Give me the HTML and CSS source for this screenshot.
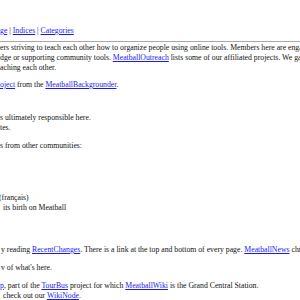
FILE: index.html
```html
<!DOCTYPE html>
<html lang="en">
<head>
    <meta charset="UTF-8">
    <title>MeatballWiki</title>
    <link rel="stylesheet" href="styles.css">
</head>
<body>
    <div class="page">
        <div class="nav"><a href="#">ge</a> | <a href="#">Indices</a> | <a href="#">Categories</a></div>
        <hr class="rule">

        <div class="intro">
            <div class="line">ers striving to teach each other how to organize people using online tools. Members here are engaged in building online communities</div>
            <div class="line">dge or supporting community tools. <a href="#">MeatballOutreach</a> lists some of our affiliated projects. We gather here to share what we know</div>
            <div class="line">aching each other.</div>
        </div>

        <div class="line about"><a href="#">oject</a> from the <a href="#">MeatballBackgrounder</a>.</div>

        <div class="people">
            <div class="line">s ultimately responsible here.</div>
            <div class="line">tes.</div>
        </div>

        <div class="line friends">s from other communities:</div>

        <div class="list">
            <div class="line out1">(français)</div>
            <div class="line in3">its birth on Meatball</div>
        </div>

        <div class="news">
            <div class="line in1">y reading <a href="#">RecentChanges</a>. There is a link at the top and bottom of every page. <a href="#">MeatballNews</a> chronicles</div>
        </div>

        <div class="line in1 overview">v of what's here.</div>

        <div class="tour">
            <div class="line"><a href="#">p</a>, part of the <a href="#">TourBus</a> project for which <a href="#">MeatballWiki</a> is the Grand Central Station.</div>
            <div class="line in3">check out our <a href="#">WikiNode</a>.</div>
        </div>
    </div>
</body>
</html>
```

FILE: styles.css
```css
html, body {
    margin: 0;
    padding: 0;
    background: #fff;
    overflow: hidden;
}

.page {
    width: 300px;
    height: 300px;
    overflow: hidden;
    font-family: "Liberation Serif", "Times New Roman", serif;
    font-size: 7.75px;
    line-height: 10px;
    color: #111;
    white-space: nowrap;
}

a {
    color: #1a1aee;
    text-decoration: underline;
}

.line {
    height: 10px;
}

.in1 { padding-left: 1px; }
.in3 { padding-left: 3px; }
.out1 { margin-left: -1px; }

.nav {
    margin-top: 26px;
}

.rule {
    margin: 5px 0 0 0;
    border: none;
    border-top: 1px solid #a8a8a8;
    height: 0;
}

.intro {
    margin-top: 1px;
}

.about {
    margin-top: 7px;
}

.people {
    margin-top: 23px;
}

.friends {
    margin-top: 8px;
}

.list {
    margin-top: 42px;
}

.news {
    margin-top: 32px;
}

.overview {
    margin-top: 8px;
}

.tour {
    margin-top: 8px;
}
```
